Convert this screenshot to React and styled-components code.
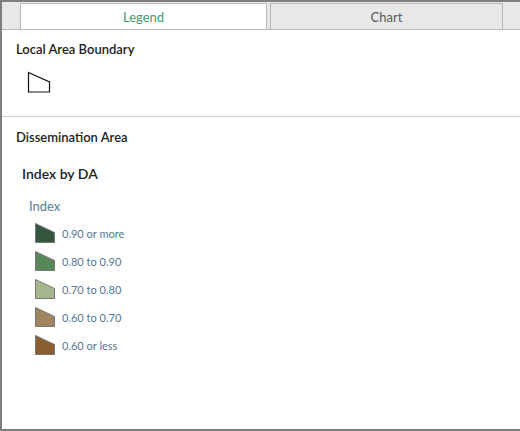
import React from 'react';
import styled, { createGlobalStyle } from 'styled-components';

const GlobalStyle = createGlobalStyle`
  html, body {
    margin: 0;
    padding: 0;
    background: #fff;
  }
  body {
    font-family: Lato, "Open Sans", "Liberation Sans", sans-serif;
  }
`;

const Frame = styled.div`
  width: 520px;
  height: 431px;
  box-sizing: border-box;
  border-left: 2px solid #7f7f7f;
  border-top: 2px solid #7f7f7f;
  border-bottom: 2px solid #7f7f7f;
  display: flex;
  flex-direction: column;
  background: #fff;
`;

const TabBar = styled.div`
  display: flex;
  align-items: stretch;
  gap: 3px;
  height: 28px;
  box-sizing: border-box;
  padding: 1px 0 0 18px;
  background: #e8e8e8;
  border-bottom: 1px solid #b8b8b8;
`;

const Tab = styled.div`
  width: ${p => p.$width}px;
  box-sizing: border-box;
  border: 1px solid #b8b8b8;
  border-bottom: none;
  background: ${p => (p.$active ? '#fff' : '#e8e8e8')};
  color: ${p => (p.$active ? '#3f9a6e' : '#5a5a5a')};
  font-size: 13px;
  display: flex;
  align-items: center;
  justify-content: center;
  padding-top: 1px;
`;

const Section = styled.div`
  padding: ${p => p.$pad};
  border-bottom: ${p => (p.$divider ? '1px solid #cfcfcf' : 'none')};
`;

const Heading = styled.div`
  font-size: 13px;
  font-weight: 600;
  color: #222;
  line-height: 16px;
  margin-left: 14px;
`;

const SubHeading = styled.div`
  font-size: 14px;
  font-weight: 600;
  color: #222;
  line-height: 16px;
  margin: 21px 0 0 20px;
`;

const FieldName = styled.div`
  font-size: 13px;
  color: #4f7f9c;
  line-height: 16px;
  margin: 16px 0 0 27px;
`;

const Symbol = styled.div`
  margin: 14px 0 0 25px;
  height: 22px;
`;

const ClassList = styled.div`
  display: flex;
  flex-direction: column;
  gap: 8px;
  margin: 9px 0 0 32px;
`;

const ClassRow = styled.div`
  display: flex;
  align-items: center;
  gap: 6px;
  height: 20px;
`;

const ClassLabel = styled.span`
  font-size: 11px;
  color: #56748f;
`;

const Swatch = ({ fill }) => (
  <svg width="22" height="22" viewBox="0 0 22 22">
    <polygon
      points="1.5,1.5 20.5,10.5 20.5,20.5 1.5,20.5"
      fill={fill}
      stroke="#777"
      strokeWidth="1"
    />
  </svg>
);

const classes = [
  { color: '#35573d', label: '0.90 or more' },
  { color: '#598858', label: '0.80 to 0.90' },
  { color: '#a6b78d', label: '0.70 to 0.80' },
  { color: '#a0845e', label: '0.60 to 0.70' },
  { color: '#8b5e32', label: '0.60 or less' },
];

export default function App() {
  return (
    <>
      <GlobalStyle />
      <Frame>
        <TabBar>
          <Tab $width={247} $active>Legend</Tab>
          <Tab $width={233}>Chart</Tab>
        </TabBar>
        <Section $divider $pad="11px 0 23px 0">
          <Heading>Local Area Boundary</Heading>
          <Symbol>
            <svg width="24" height="22" viewBox="0 0 24 22">
              <polygon
                points="1.5,1.5 22.5,11 22.5,21 1.5,21"
                fill="#fff"
                stroke="#111"
                strokeWidth="1.2"
              />
            </svg>
          </Symbol>
        </Section>
        <Section $pad="12px 0 0 0">
          <Heading>Dissemination Area</Heading>
          <SubHeading>Index by DA</SubHeading>
          <FieldName>Index</FieldName>
          <ClassList>
            {classes.map(c => (
              <ClassRow key={c.label}>
                <Swatch fill={c.color} />
                <ClassLabel>{c.label}</ClassLabel>
              </ClassRow>
            ))}
          </ClassList>
        </Section>
      </Frame>
    </>
  );
}
